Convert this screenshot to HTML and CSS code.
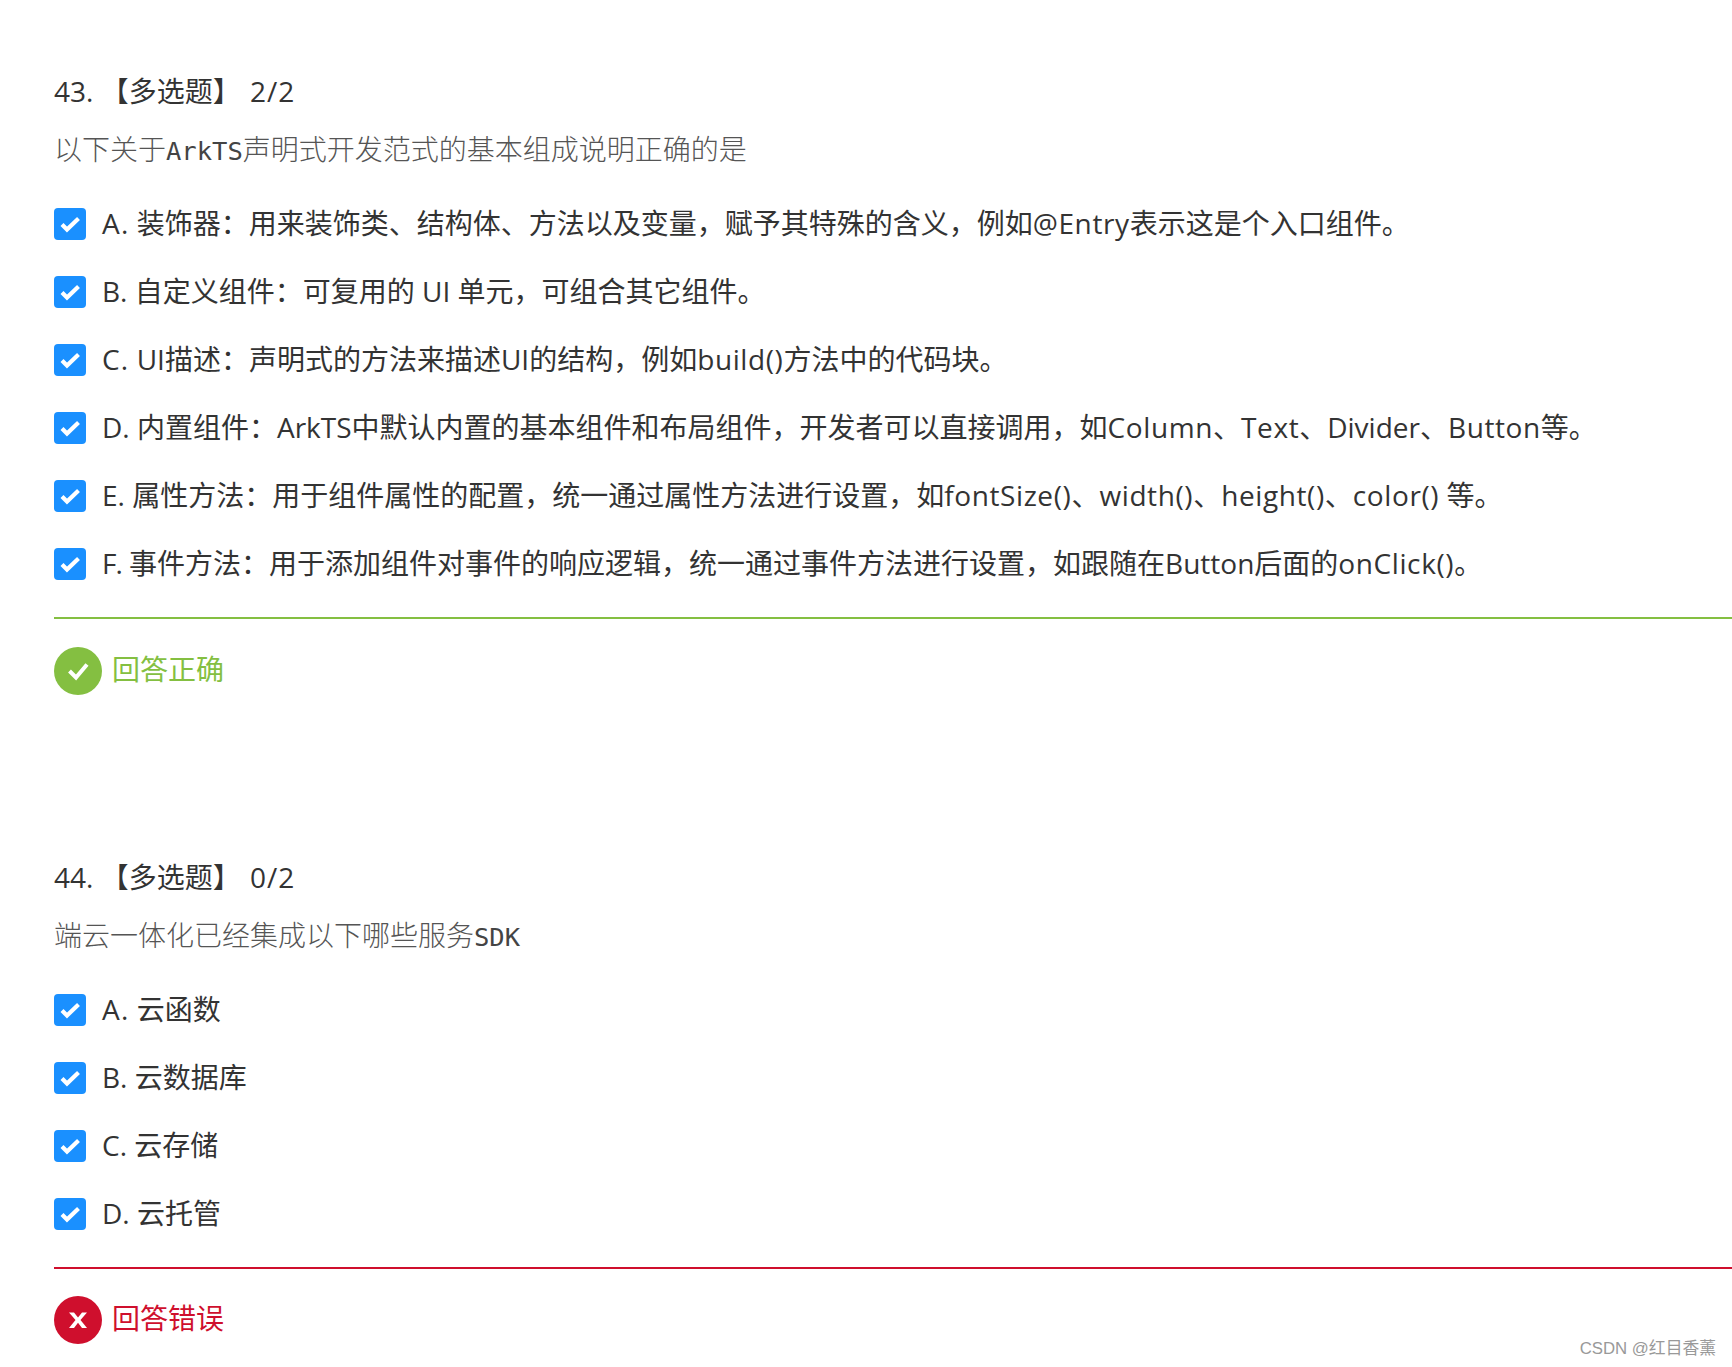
FILE: index.html
```html
<!DOCTYPE html>
<html lang="zh-CN">
<head>
<meta charset="utf-8">
<title>答题结果</title>
<link rel="stylesheet" href="styles.css">
</head>
<body>
<main class="page">
  <section class="question">
    <h2 class="title">43. 【多选题】 <b class="score">2/2</b></h2>
    <p class="stem">以下关于<span class="mono">ArkTS</span>声明式开发范式的基本组成说明正确的是</p>
    <ul class="options">
      <li class="option"><svg class="check" viewBox="0 0 32 32"><rect width="32" height="32" rx="4"/><path d="M8 16.5l5 5L24.5 10.5"/></svg><span><b class="wide">A.</b> 装饰器：用来装饰类、结构体、方法以及变量，赋予其特殊的含义，例如<b class="lat">@Entry</b>表示这是个入口组件。</span></li>
      <li class="option"><svg class="check" viewBox="0 0 32 32"><rect width="32" height="32" rx="4"/><path d="M8 16.5l5 5L24.5 10.5"/></svg><span>B. 自定义组件：可复用的 UI 单元，可组合其它组件。</span></li>
      <li class="option"><svg class="check" viewBox="0 0 32 32"><rect width="32" height="32" rx="4"/><path d="M8 16.5l5 5L24.5 10.5"/></svg><span><b class="wide">C.</b> UI描述：声明式的方法来描述UI的结构，例如<b class="lat">build()</b>方法中的代码块。</span></li>
      <li class="option"><svg class="check" viewBox="0 0 32 32"><rect width="32" height="32" rx="4"/><path d="M8 16.5l5 5L24.5 10.5"/></svg><span>D. 内置组件：ArkTS中默认内置的基本组件和布局组件，开发者可以直接调用，如<b class="lat">Column</b>、<b class="lat">Text</b>、Divider、<b class="lat">Button</b>等。</span></li>
      <li class="option"><svg class="check" viewBox="0 0 32 32"><rect width="32" height="32" rx="4"/><path d="M8 16.5l5 5L24.5 10.5"/></svg><span>E. 属性方法：用于组件属性的配置，统一通过属性方法进行设置，如<b class="lat">fontSize()</b>、<b class="lat">width()</b>、<b class="lat">height()</b>、<b class="lat">color()</b> 等。</span></li>
      <li class="option"><svg class="check" viewBox="0 0 32 32"><rect width="32" height="32" rx="4"/><path d="M8 16.5l5 5L24.5 10.5"/></svg><span><b class="tight">F.</b> 事件方法：用于添加组件对事件的响应逻辑，统一通过事件方法进行设置，如跟随在Button后面的<b class="lat">onClick()</b>。</span></li>
    </ul>
    <div class="result ok">
      <svg class="badge" viewBox="0 0 48 48"><circle cx="24" cy="24" r="24"/><path d="M15.5 24L22 30.5 33 17.5"/></svg>
      <span>回答正确</span>
    </div>
  </section>
  <section class="question">
    <h2 class="title">44. 【多选题】 <b class="score">0/2</b></h2>
    <p class="stem">端云一体化已经集成以下哪些服务<span class="mono">SDK</span></p>
    <ul class="options">
      <li class="option"><svg class="check" viewBox="0 0 32 32"><rect width="32" height="32" rx="4"/><path d="M8 16.5l5 5L24.5 10.5"/></svg><span><b class="wide">A.</b> 云函数</span></li>
      <li class="option"><svg class="check" viewBox="0 0 32 32"><rect width="32" height="32" rx="4"/><path d="M8 16.5l5 5L24.5 10.5"/></svg><span>B. 云数据库</span></li>
      <li class="option"><svg class="check" viewBox="0 0 32 32"><rect width="32" height="32" rx="4"/><path d="M8 16.5l5 5L24.5 10.5"/></svg><span>C. 云存储</span></li>
      <li class="option"><svg class="check" viewBox="0 0 32 32"><rect width="32" height="32" rx="4"/><path d="M8 16.5l5 5L24.5 10.5"/></svg><span>D. 云托管</span></li>
    </ul>
    <div class="result bad">
      <svg class="badge" viewBox="0 0 48 48"><circle cx="24" cy="24" r="24"/><polygon points="15,16.5 20,16.5 24,21.5 28,16.5 33,16.5 26.5,24 33,32 28,32 24,26.8 20,32 15,32 21.5,24"/></svg>
      <span>回答错误</span>
    </div>
  </section>
</main>
<div class="watermark">CSDN @红目香薰</div>
</body>
</html>
```
FILE: styles.css
```css
* { box-sizing: border-box; }
html, body { margin: 0; padding: 0; background: #fff; }
body {
  font-family: "Open Sans", "Noto Sans CJK SC", sans-serif;
  color: #333;
}
b { font-weight: 400; }
.page { padding: 72px 0 0 54px; }
.question { margin-bottom: 163px; }
.question:last-child { margin-bottom: 0; }
.title {
  margin: 0;
  height: 40px;
  font-size: 28px;
  line-height: 38px;
  font-weight: 400;
  color: #333;
}
.score { margin-left: 2px; letter-spacing: 1px; }
.stem {
  margin: 18px 0 0;
  height: 40px;
  font-family: "Noto Sans CJK SC", sans-serif;
  font-size: 28px;
  font-weight: 300;
  line-height: 37px;
  color: #555;
}
.mono { font-family: "DejaVu Sans Mono", monospace; font-size: 25.5px; font-weight: 400; color: #444; }
.options { list-style: none; margin: 20px 0 0; padding: 0; }
.option {
  display: flex;
  align-items: center;
  gap: 16px;
  height: 68px;
  font-size: 28px;
  line-height: 40px;
  color: #333;
  white-space: nowrap;
}
.option span { margin-bottom: 2px; }
.lat { letter-spacing: 0.6px; }
.wide { letter-spacing: 1.2px; }
.tight { letter-spacing: -1px; }
.check { width: 32px; height: 32px; flex: none; }
.check rect { fill: #1a90ff; }
.check path { fill: none; stroke: #fff; stroke-width: 4.2; }
.result {
  margin-top: 19px;
  padding-top: 28px;
  display: flex;
  align-items: center;
  gap: 10px;
  font-family: "Noto Sans CJK SC", sans-serif;
  font-size: 28px;
}
.result span { line-height: 36px; margin-bottom: 7px; }
.badge { width: 48px; height: 48px; flex: none; }
.badge path { fill: none; stroke: #fff; stroke-width: 4; }
.badge polygon { fill: #fff; }
.ok { border-top: 2px solid #84bf41; color: #84bf41; }
.ok .badge circle { fill: #84bf41; }
.bad { padding-top: 27px; border-top: 2px solid #cf0f2d; color: #cf0f2d; }
.bad .badge circle { fill: #cf0f2d; }
.watermark {
  position: absolute;
  right: 16px;
  bottom: 6px;
  font-family: "Liberation Sans", "Noto Sans CJK SC", sans-serif;
  font-size: 16.8px;
  line-height: 24px;
  color: #999;
}
```
